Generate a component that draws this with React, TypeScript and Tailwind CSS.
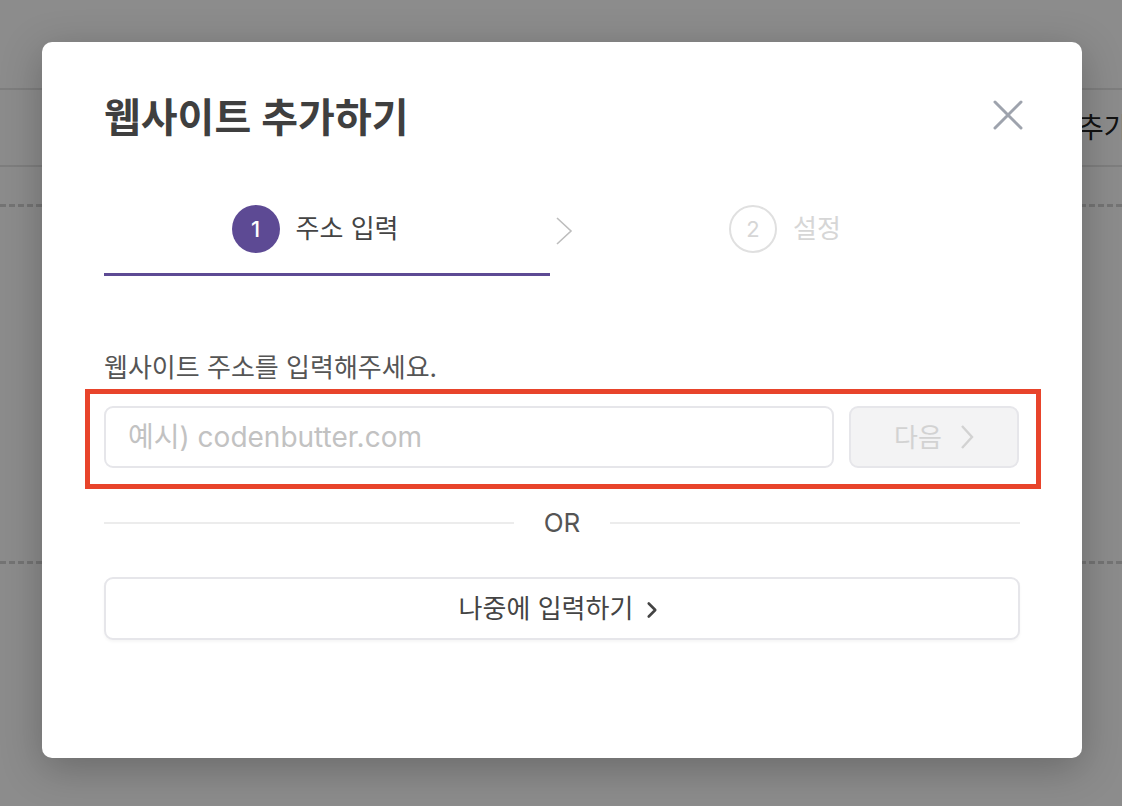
import { ChevronRight } from "lucide-react";

const font = { fontFamily: 'Inter, "Noto Sans CJK KR", sans-serif' };

function Backdrop() {
  return (
    <div className="h-[806px] w-[1122px] overflow-hidden bg-white">
      <div className="h-[90px] border-b-2 border-[#e6e6e6]" />
      <div className="flex h-[77px] items-center border-b-2 border-[#e6e6e6] whitespace-nowrap">
        <span className="ml-[967px] text-[28px] text-[#222]">웹사이트 추가하기</span>
      </div>
      <div className="mt-[37px] border-t-[3px] border-dashed border-[#d4d4d4]" />
      <div className="mt-[354px] border-t-[3px] border-dashed border-[#d4d4d4]" />
    </div>
  );
}

function Steps() {
  return (
    <div className="mt-[63px] flex items-start">
      <div className="flex w-[446px] items-center justify-center gap-4 border-b-[3px] border-[#5d4a94] pr-[24px] pb-[20px]">
        <span className="flex h-12 w-12 items-center justify-center rounded-full bg-[#5d4a94] text-[22px] font-medium text-white">
          1
        </span>
        <span className="text-[26px] leading-[34px] text-[#444]">주소 입력</span>
      </div>
      <svg width="26" height="48" viewBox="0 0 26 48" className="mt-[1px] shrink-0">
        <path d="M7 12 L21 25 L7 38" fill="none" stroke="#bdbdbd" strokeWidth="1.6" />
      </svg>
      <div className="flex flex-1 items-center justify-center gap-4 pr-[26px] pb-[20px]">
        <span className="flex h-12 w-12 items-center justify-center rounded-full border-2 border-[#e0e0e0] text-[22px] text-[#d6d6d6]">
          2
        </span>
        <span className="text-[26px] leading-[34px] text-[#d6d6d6]">설정</span>
      </div>
    </div>
  );
}

export default function App() {
  return (
    <div className="relative h-[806px] w-[1122px] overflow-hidden" style={font}>
      <Backdrop />
      <div className="absolute inset-0 bg-black/[0.45] px-[42px] pt-[42px]">
        <div className="relative h-[716px] w-[1040px] rounded-[10px] bg-white px-[62px] pt-[52px] shadow-[0_10px_40px_rgba(0,0,0,0.25)]">
          <div className="flex items-center justify-between">
            <h1 className="text-[40px] leading-[48px] font-semibold text-[#3f3f3f]">웹사이트 추가하기</h1>
            <button type="button" className="mr-[-3px] mt-[-6px]">
              <svg width="30" height="30" viewBox="0 0 30 30">
                <path d="M2 2 L28 28 M28 2 L2 28" stroke="#9ea3ad" strokeWidth="3" strokeLinecap="round" />
              </svg>
            </button>
          </div>

          <Steps />

          <p className="mt-[75px] text-[26px] leading-[34px] text-[#555]">웹사이트 주소를 입력해주세요.</p>

          <div className="mt-[4px] ml-[-19px] mr-[-21px] border-[5px] border-[#e8442b] pt-[12px] pr-[17px] pb-[16px] pl-[14px]">
            <div className="flex gap-[15px]">
              <input
                placeholder="예시) codenbutter.com"
                className="h-[62px] flex-1 rounded-[9px] border-2 border-[#e6e6ea] px-[22px] text-[28px] text-[#333] outline-none placeholder:text-[#c2c2c2]"
              />
              <button
                type="button"
                disabled
                className="flex h-[62px] w-[170px] items-center justify-center gap-[18px] rounded-[9px] border-2 border-[#e6e6ea] bg-[#f3f3f4] text-[26px] text-[#d2d2d2]"
              >
                다음
                <svg width="14" height="26" viewBox="0 0 14 26">
                  <path d="M2 2 L12 13 L2 24" fill="none" stroke="#d2d2d2" strokeWidth="2.4" />
                </svg>
              </button>
            </div>
          </div>

          <div className="mt-[19px] flex items-center">
            <div className="h-[2px] flex-1 bg-[#ececec]" />
            <span className="px-[30px] text-[26px] leading-[30px] text-[#555]">OR</span>
            <div className="h-[2px] flex-1 bg-[#ececec]" />
          </div>

          <button
            type="button"
            className="mt-[39px] flex h-[63px] w-full items-center justify-center gap-[6px] rounded-[9px] border-2 border-[#e6e6ea] bg-white text-[26px] text-[#444] shadow-[0_2px_3px_rgba(0,0,0,0.04)]"
          >
            나중에 입력하기
            <ChevronRight size={26} strokeWidth={2.4} className="mt-[2px]" />
          </button>
        </div>
      </div>
    </div>
  );
}
